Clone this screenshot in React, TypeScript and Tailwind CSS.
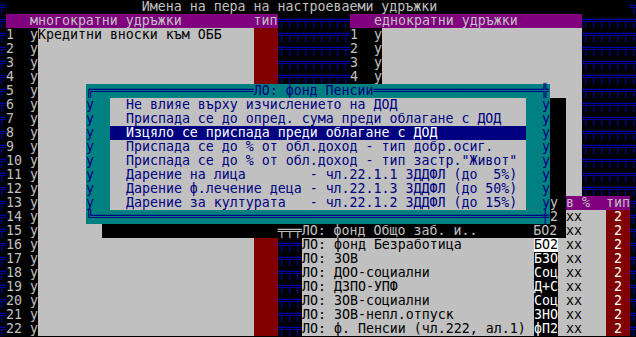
import React from "react";

type Attr =
  | "pat"
  | "bk"
  | "hdr"
  | "gr"
  | "red"
  | "teal"
  | "item"
  | "sel"
  | "code"
  | "cur"
  | "shd";

const CLS: Record<Attr, string> = {
  pat: "bg-black text-[#0000a8]",
  bk: "bg-black text-[#c0c0c0]",
  hdr: "bg-[#800080] text-[#c0c0c0]",
  gr: "bg-[#c0c0c0] text-black",
  red: "bg-[#800000] text-white",
  teal: "bg-[#008080] text-[#000080]",
  item: "bg-[#c0c0c0] text-[#000080]",
  sel: "bg-[#000080] text-white",
  code: "bg-black text-white",
  cur: "bg-white text-black",
  shd: "bg-black text-[#c0c0c0]",
};

const W = 80;
const H = 24;

type Cell = { c: string; a: Attr };

function buildScreen(): Cell[][] {
  const buf: Cell[][] = [];
  for (let r = 0; r < H; r++) {
    const row: Cell[] = [];
    for (let c = 0; c < W; c++) row.push({ c: "╤", a: "pat" });
    buf.push(row);
  }
  const put = (r: number, c: number, s: string, a: Attr) => {
    const chars = Array.from(s);
    chars.forEach((ch, i) => {
      if (c + i < W) buf[r][c + i] = { c: ch, a };
    });
  };
  const fill = (r: number, c0: number, c1: number, a: Attr, ch = " ") => {
    for (let c = c0; c <= c1; c++) buf[r][c] = { c: ch, a };
  };
  const shade = (r: number, c0: number, c1: number) => {
    for (let c = c0; c <= c1; c++) buf[r][c] = { c: buf[r][c].c, a: "shd" };
  };

  // title row
  fill(0, 1, 78, "bk");
  put(0, 18, "Имена на пера на настроеваеми удръжки", "bk");

  // left window
  fill(1, 1, 34, "hdr");
  put(1, 4, "многократни удръжки", "hdr");
  put(1, 32, "тип", "hdr");
  for (let i = 1; i <= 22; i++) {
    const r = i + 1;
    fill(r, 1, 4, "bk");
    put(r, 1, String(i), "bk");
    put(r, 4, "у", "bk");
    fill(r, 5, 31, "gr");
    fill(r, 32, 34, "red");
  }
  put(2, 5, "Кредитни вноски към ОББ", "gr");

  // right window
  fill(1, 44, 72, "hdr");
  put(1, 47, "еднократни удръжки", "hdr");
  for (let i = 1; i <= 22; i++) {
    const r = i + 1;
    fill(r, 44, 47, "bk");
    put(r, 44, String(i), "bk");
    put(r, 47, "у", "bk");
    fill(r, 48, 72, "gr");
  }

  // lower window
  fill(14, 38, 78, "hdr");
  put(14, 67, "код", "hdr");
  put(14, 69, "у", "hdr");
  put(14, 71, "в %", "hdr");
  put(14, 76, "тип", "hdr");
  const low: [string, string][] = [
    ["ЛО: фонд Пенсии", "ДО2"],
    ["ЛО: фонд Общо заб. и..", "БО2"],
    ["ЛО: фонд Безработица", "БО2"],
    ["ЛО: ЗОВ", "БЗО"],
    ["ЛО: ДОО-социални", "Соц"],
    ["ЛО: ДЗПО-УПФ", "Д+С"],
    ["ЛО: ЗОВ-социални", "Соц"],
    ["ЛО: ЗОВ-непл.отпуск", "ЗНО"],
    ["ЛО: ф. Пенсии (чл.222, ал.1)", "фП2"],
  ];
  low.forEach(([name, code], k) => {
    const r = 15 + k;
    fill(r, 38, 66, "gr");
    put(r, 38, name, "gr");
    fill(r, 67, 69, r === 17 ? "cur" : "code");
    put(r, 67, code, r === 17 ? "cur" : "code");
    fill(r, 70, 75, "gr");
    put(r, 71, "xx", "gr");
    fill(r, 76, 78, "red");
    put(r, 77, "2", "red");
  });

  // dialog
  for (let r = 6; r <= 15; r++) fill(r, 11, 68, "teal");
  put(6, 11, "╔", "teal");
  fill(6, 12, 67, "teal", "═");
  put(6, 32, "ЛО: фонд Пенсии", "teal");
  put(6, 68, "╬", "teal");
  put(15, 11, "╚", "teal");
  fill(15, 12, 67, "teal", "═");
  put(15, 68, "╪", "teal");
  const items = [
    "Не влияе върху изчислението на ДОД",
    "Приспада се до опред. сума преди облагане с ДОД",
    "Изцяло се приспада преди облагане с ДОД",
    "Приспада се до % от обл.доход - тип добр.осиг.",
    "Приспада се до % от обл.доход - тип застр.\"Живот\"",
    "Дарение на лица        - чл.22.1.1 ЗДДФЛ (до  5%)",
    "Дарение ф.лечение деца - чл.22.1.3 ЗДДФЛ (до 50%)",
    "Дарение за културата   - чл.22.1.2 ЗДДФЛ (до 15%)",
  ];
  items.forEach((t, k) => {
    const r = 7 + k;
    const a: Attr = k === 2 ? "sel" : "item";
    put(r, 11, "у", "teal");
    fill(r, 14, 65, a);
    put(r, 16, t, a);
    put(r, 68, "у", "teal");
  });

  // shadow
  for (let r = 7; r <= 15; r++) shade(r, 69, 70);
  shade(16, 13, 70);

  return buf;
}

const screen = buildScreen();

function Row({ cells }: { cells: Cell[] }) {
  const runs: { a: Attr; s: string; n: number }[] = [];
  for (const cell of cells) {
    const last = runs[runs.length - 1];
    if (last && last.a === cell.a) {
      last.s += cell.c;
      last.n += 1;
    } else {
      runs.push({ a: cell.a, s: cell.c, n: 1 });
    }
  }
  return (
    <div className="flex h-[14px]">
      {runs.map((run, i) => (
        <span
          key={i}
          className={`shrink-0 whitespace-pre h-[14px] leading-[14px] ${CLS[run.a]}`}
          style={{ width: run.n * 8 }}
        >
          {run.s}
        </span>
      ))}
    </div>
  );
}

export default function App() {
  return (
    <div className="w-[636px] h-[337px] bg-black overflow-hidden">
      <div className="ml-[-2px] w-[640px] font-['DejaVu_Sans_Mono',monospace] text-[13.288px]">
        {screen.map((cells, r) => (
          <Row key={r} cells={cells} />
        ))}
      </div>
    </div>
  );
}
